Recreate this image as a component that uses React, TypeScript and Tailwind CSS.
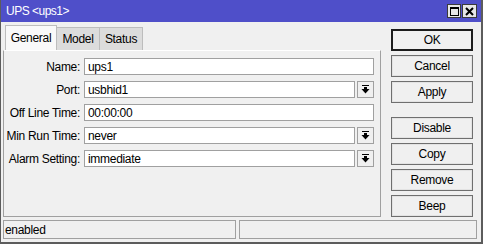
import React from "react";

type Field = {
  label: string;
  value: string;
  dropdown?: boolean;
};

const fields: Field[] = [
  { label: "Name:", value: "ups1" },
  { label: "Port:", value: "usbhid1", dropdown: true },
  { label: "Off Line Time:", value: "00:00:00" },
  { label: "Min Run Time:", value: "never", dropdown: true },
  { label: "Alarm Setting:", value: "immediate", dropdown: true },
];

const DropArrow = () => (
  <svg width="9" height="9" viewBox="0 0 9 9" fill="#000">
    <rect x="1" y="0" width="7" height="1" />
    <rect x="3" y="2" width="3" height="2" />
    <polygon points="0.5,4 8.5,4 4.5,8.5" />
  </svg>
);

const SideButton = ({ label, primary }: { label: string; primary?: boolean }) => (
  <div
    className={
      primary
        ? "flex h-[22px] items-center justify-center border-2 border-[#1c1c1c] bg-[#f0f0f0] text-black"
        : "flex h-[22px] items-center justify-center border border-[#6f6f6f] bg-[#f0f0f0] text-black shadow-[inset_0_0_0_1px_#e3e3e3]"
    }
  >
    {label}
  </div>
);

export default function App() {
  return (
    <div className="flex h-[244px] w-[483px] flex-col overflow-hidden border-b-2 border-l border-r-2 border-[#5c5c5c] bg-[#f0f0f0] font-['Liberation_Sans',Arial,sans-serif] text-[12px] leading-none tracking-[-0.3px] whitespace-nowrap text-black">
      {/* title bar */}
      <div className="flex h-[22px] shrink-0 items-center justify-between bg-[#4f4fc9] pl-[5px] pr-[4px]">
        <span className="tracking-[-0.5px] text-white">UPS &lt;ups1&gt;</span>
        <div className="flex gap-[1px]">
          <div className="flex h-[14px] w-[14px] items-center justify-center border border-[#3a3a3a] bg-[#e6e6e6]">
            <div className="h-[9px] w-[9px] border border-t-2 border-black" />
          </div>
          <div className="flex h-[14px] w-[15px] items-center justify-center border border-[#3a3a3a] bg-[#e6e6e6]">
            <svg width="9" height="9" viewBox="0 0 9 9">
              <path d="M1 1 L8 8 M8 1 L1 8" stroke="#000" strokeWidth="2" />
            </svg>
          </div>
        </div>
      </div>

      <div className="flex h-[198px] shrink-0">
        {/* tabs and panel */}
        <div className="ml-[2px] flex w-[378px] flex-col pt-[3px]">
          <div className="flex items-end pl-[2px]">
            <div className="flex h-[25px] w-[52px] items-center justify-center border border-b-0 border-[#bdbdbd] bg-[#f9f9f9]">
              General
            </div>
            <div className="flex h-[23px] w-[43px] items-center justify-center border border-b-0 border-l-0 border-[#bdbdbd] bg-[#dcdcdc]">
              Model
            </div>
            <div className="flex h-[23px] w-[43px] items-center justify-center border border-b-0 border-l-0 border-[#bdbdbd] bg-[#dcdcdc]">
              Status
            </div>
          </div>
          <div className="flex h-[167px] flex-col gap-[6px] border border-[#a0a0a0] border-t-[#ffffff] pr-[6px] pt-[7px]">
            {fields.map((f) => (
              <div key={f.label} className="flex h-[17px] items-center">
                <div className="w-[76px] text-right">{f.label}</div>
                <div className="ml-[4px] flex h-[17px] flex-1 gap-[2px]">
                  <div className="flex h-[17px] flex-1 items-center border border-[#a0a0a0] bg-white pl-[3px]">
                    {f.value}
                  </div>
                  {f.dropdown ? (
                    <div className="flex h-[17px] w-[17px] items-center justify-center border border-[#a0a0a0] bg-[#f0f0f0]">
                      <DropArrow />
                    </div>
                  ) : null}
                </div>
              </div>
            ))}
          </div>
        </div>

        {/* side buttons */}
        <div className="ml-[10px] flex w-[82px] flex-col gap-[4px] pt-[7px]">
          <SideButton label="OK" primary />
          <SideButton label="Cancel" />
          <SideButton label="Apply" />
          <div className="h-[6px]" />
          <SideButton label="Disable" />
          <SideButton label="Copy" />
          <SideButton label="Remove" />
          <SideButton label="Beep" />
        </div>
      </div>

      {/* status bar */}
      <div className="ml-[2px] flex h-[19px] gap-[3px]">
        <div className="flex w-[233px] items-center border border-[#a0a0a0] pl-[1px]">
          enabled
        </div>
        <div className="w-[238px] border border-[#a0a0a0]" />
      </div>
    </div>
  );
}
